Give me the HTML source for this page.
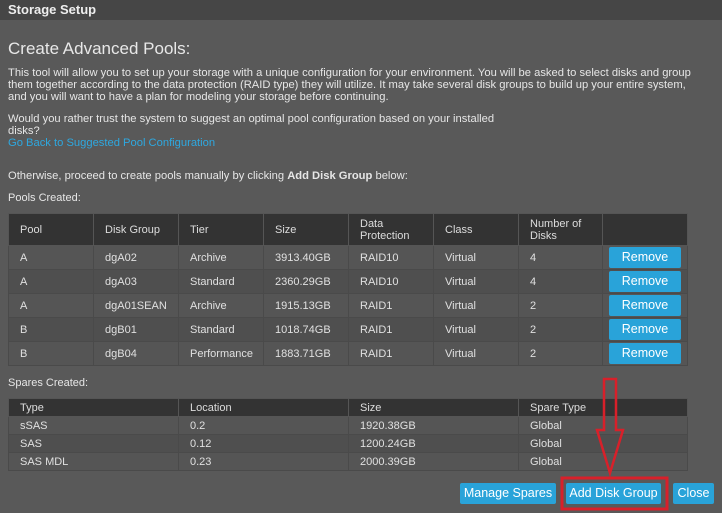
<!DOCTYPE html><html><head><style>
body{margin:0;width:722px;height:513px;background:#595959;font-family:"Liberation Sans",sans-serif;color:#e6e6e6;overflow:hidden;position:relative;font-size:11px}
.t{position:absolute;left:0;top:0;width:722px;height:20px;background:#464646;font-weight:bold;font-size:13px;line-height:20px;padding-left:8px;box-sizing:border-box;color:#eee}
.a{position:absolute;left:8px;white-space:nowrap}
table{position:absolute;left:8px;border-collapse:collapse;font-size:11px;table-layout:fixed}
td{padding:0 0 0 11px;border:1px solid #4a4a4a;color:#e0e0e0}
th{background:#333;font-weight:normal;text-align:left;padding:0 0 0 11px;border:1px solid #555;line-height:12px;color:#ddd}
tr.o td{background:#555}tr.e td{background:#4f4f4f}
.b{background:#29a3d9;color:#fff;display:inline-block;text-align:center;font-size:12.5px;border-radius:2px}
</style></head><body>
<div class="t">Storage Setup</div>
<div class="a" style="top:39px;font-size:17px;color:#e8e8e8">Create Advanced Pools:</div>
<div class="a" style="top:67px;line-height:12px;font-size:11.2px">This tool will allow you to set up your storage with a unique configuration for your environment. You will be asked to select disks and group<br>them together according to the data protection (RAID type) they will utilize. It may take several disk groups to build up your entire system,<br>and you will want to have a plan for modeling your storage before continuing.</div>
<div class="a" style="top:113px;line-height:12px;font-size:11.2px">Would you rather trust the system to suggest an optimal pool configuration based on your installed<br>disks?<br><span style="color:#2ea8e0">Go Back to Suggested Pool Configuration</span></div>
<div class="a" style="top:170px;font-size:11.2px">Otherwise, proceed to create pools manually by clicking <b>Add Disk Group</b> below:</div>
<div class="a" style="top:192px">Pools Created:</div>
<table style="top:213px;width:679px">
<col style="width:85px"><col style="width:85px"><col style="width:85px"><col style="width:85px"><col style="width:85px"><col style="width:85px"><col style="width:84px"><col style="width:85px">
<tr style="height:32px"><th>Pool</th><th>Disk Group</th><th>Tier</th><th>Size</th><th>Data<br>Protection</th><th>Class</th><th>Number of<br>Disks</th><th></th></tr>
<tr class="o" style="height:24px"><td>A</td><td>dgA02</td><td>Archive</td><td>3913.40GB</td><td>RAID10</td><td>Virtual</td><td>4</td><td style="padding:0 0 0 6px"><span class="b" style="width:72px;height:21px;line-height:21px">Remove</span></td></tr>
<tr class="e" style="height:24px"><td>A</td><td>dgA03</td><td>Standard</td><td>2360.29GB</td><td>RAID10</td><td>Virtual</td><td>4</td><td style="padding:0 0 0 6px"><span class="b" style="width:72px;height:21px;line-height:21px">Remove</span></td></tr>
<tr class="o" style="height:24px"><td>A</td><td>dgA01SEAN</td><td>Archive</td><td>1915.13GB</td><td>RAID1</td><td>Virtual</td><td>2</td><td style="padding:0 0 0 6px"><span class="b" style="width:72px;height:21px;line-height:21px">Remove</span></td></tr>
<tr class="e" style="height:24px"><td>B</td><td>dgB01</td><td>Standard</td><td>1018.74GB</td><td>RAID1</td><td>Virtual</td><td>2</td><td style="padding:0 0 0 6px"><span class="b" style="width:72px;height:21px;line-height:21px">Remove</span></td></tr>
<tr class="o" style="height:24px"><td>B</td><td>dgB04</td><td>Performance</td><td>1883.71GB</td><td>RAID1</td><td>Virtual</td><td>2</td><td style="padding:0 0 0 6px"><span class="b" style="width:72px;height:21px;line-height:21px">Remove</span></td></tr>
</table>
<div class="a" style="top:377px">Spares Created:</div>
<table style="top:398px;width:679px">
<col style="width:170px"><col style="width:170px"><col style="width:170px"><col style="width:169px">
<tr style="height:18px"><th>Type</th><th>Location</th><th>Size</th><th>Spare Type</th></tr>
<tr class="o" style="height:18px"><td>sSAS</td><td>0.2</td><td>1920.38GB</td><td>Global</td></tr>
<tr class="e" style="height:18px"><td>SAS</td><td>0.12</td><td>1200.24GB</td><td>Global</td></tr>
<tr class="o" style="height:18px"><td>SAS MDL</td><td>0.23</td><td>2000.39GB</td><td>Global</td></tr>
</table>
<span class="b" style="position:absolute;left:460px;top:483px;width:96px;height:21px;line-height:21px">Manage Spares</span>
<span class="b" style="position:absolute;left:566px;top:483px;width:95px;height:21px;line-height:21px">Add Disk Group</span>
<span class="b" style="position:absolute;left:673px;top:483px;width:41px;height:21px;line-height:21px">Close</span>
<svg style="position:absolute;left:0;top:0" width="722" height="513"><g fill="none" stroke="#d8202a" stroke-width="3"><rect x="562" y="478" width="105" height="31"/><path d="M604 379H616V430H623L610 473L597 430H604Z" stroke-width="2.5"/></g></svg>
</body></html>
